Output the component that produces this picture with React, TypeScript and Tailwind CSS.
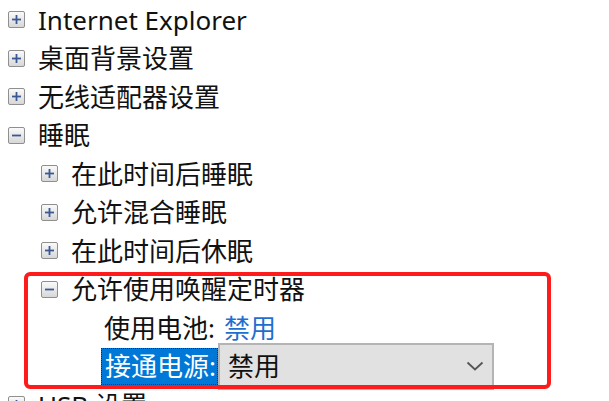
import { ReactNode } from "react";

const FONT = "font-['Segoe_UI','Noto_Sans','Noto_Sans_CJK_SC',sans-serif]";

// 折叠/展开小方块
function ExpandBox({ open }: { open?: boolean }) {
  return (
    <svg width="17" height="17" viewBox="0 0 17 17" className="shrink-0">
      <defs>
        <linearGradient id="boxfill" x1="0" y1="0" x2="0" y2="1">
          <stop offset="0" stopColor="#fbfbfb" />
          <stop offset="1" stopColor="#d6d6d6" />
        </linearGradient>
      </defs>
      <rect x="0.5" y="0.5" width="16" height="16" rx="1.5" fill="url(#boxfill)" stroke="#8f8f8f" />
      <path d="M4 8.5h9" stroke="#3a5894" strokeWidth="1.8" />
      {!open && <path d="M8.5 4v9" stroke="#3a5894" strokeWidth="1.8" />}
    </svg>
  );
}

function Node({
  level,
  open,
  children,
}: {
  level: 1 | 2;
  open?: boolean;
  children: ReactNode;
}) {
  return (
    <div
      className={`flex h-[38.5px] items-center gap-[13px] ${level === 1 ? "pl-2" : "pl-[41px]"}`}
    >
      <ExpandBox open={open} />
      <span className="whitespace-nowrap text-[26px] leading-none text-[#111]">{children}</span>
    </div>
  );
}

export default function App() {
  return (
    <div className={`relative h-[401px] w-[609px] overflow-hidden bg-white ${FONT}`}>
      <div className="pt-[0.25px]">
        <Node level={1}>Internet Explorer</Node>
        <Node level={1}>桌面背景设置</Node>
        <Node level={1}>无线适配器设置</Node>
        <Node level={1} open>
          睡眠
        </Node>
        <Node level={2}>在此时间后睡眠</Node>
        <Node level={2}>允许混合睡眠</Node>
        <Node level={2}>在此时间后休眠</Node>
        <Node level={2} open>
          允许使用唤醒定时器
        </Node>

        {/* 设置值 */}
        <div className="flex h-[38.5px] items-center pl-[104px] text-[26px] leading-none">
          <span className="whitespace-nowrap text-[#111]">使用电池:</span>
          <span className="ml-[9px] whitespace-nowrap text-[#1e6fd0]">禁用</span>
        </div>
        <div className="flex h-[38.5px] items-center pl-[101px] text-[26px] leading-none">
          <span className="flex h-[37px] w-[117px] items-center border border-dotted border-[#3a2a10] bg-[#0078d7] pl-[3px] whitespace-nowrap text-white">
            接通电源:
          </span>
          <div className="flex h-[47px] w-[276px] shrink-0 items-center justify-between border-2 border-[#b4b4b4] bg-[#e1e1e1] pl-[8px] pr-[8px]">
            <span className="whitespace-nowrap text-[#111]">禁用</span>
            <svg width="18" height="10" viewBox="0 0 18 10">
              <path d="M1.5 1.5 9 8.5l7.5-7" fill="none" stroke="#555" strokeWidth="1.8" />
            </svg>
          </div>
        </div>
        <Node level={1}>USB 设置</Node>
      </div>

      {/* 标注红框 */}
      <div className="pointer-events-none absolute left-[24px] top-[272px] h-[117px] w-[527px] rounded-[6px] border-[4px] border-[#fe1b1b]" />
    </div>
  );
}
